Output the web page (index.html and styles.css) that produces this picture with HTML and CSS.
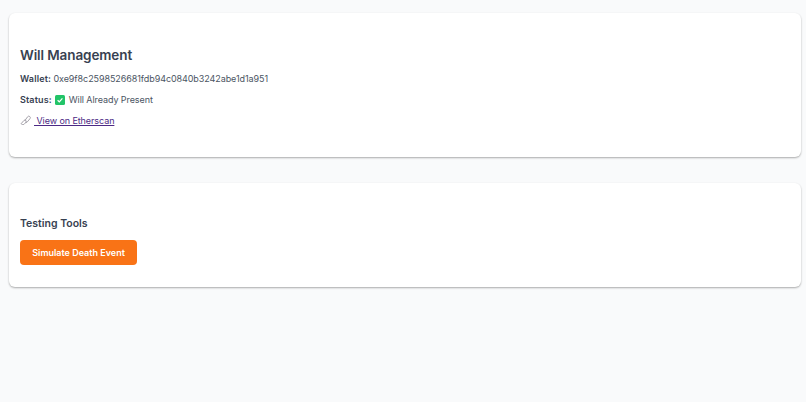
FILE: index.html
```html
<!DOCTYPE html>
<html lang="en">

<head>
    <meta charset="UTF-8">
    <title>Will Management</title>
    <link rel="stylesheet" href="styles.css">
</head>

<body>
    <div class="card card-will">
        <h2>Will Management</h2>
        <p><strong>Wallet:</strong> 0xe9f8c2598526681fdb94c0840b3242abe1d1a951</p>
        <p class="status"><strong>Status:</strong>
            <svg class="check" width="10" height="10" viewBox="0 0 10 10">
                <rect width="10" height="10" rx="1.5" fill="#22c468" />
                <path d="M2.6 5.2 4.3 6.8 7.4 3.4" fill="none" stroke="#fff" stroke-width="1.2" />
            </svg>
            Will Already Present
        </p>
        <a class="link" href="#">
            <svg class="chain" width="12" height="10" viewBox="0 0 12 10">
                <g fill="none" stroke="#8f8b96" stroke-width="0.8">
                    <path d="M1.2 8.6 4 5.4a1.4 1.4 0 0 1 2.1 1.8L4 9.4a1.3 1.3 0 0 1-2 0 1 1 0 0 1-.8-.8z" />
                    <path d="M5 5.4 7.6 1.8a1.5 1.5 0 0 1 2.4 1.8L7.4 6.8a1.4 1.4 0 0 1-2.1.2" />
                </g>
            </svg>
            View on Etherscan
        </a>
    </div>

    <div class="card card-tools">
        <h3>Testing Tools</h3>
        <button type="button">Simulate Death Event</button>
    </div>
</body>

</html>
```

FILE: styles.css
```css
body {
    background: #f9fafb;
    color: #4b5563;
    font-family: Inter, "Liberation Sans", sans-serif;
    font-size: 9px;
    letter-spacing: -0.08px;
    margin: 0;
    min-height: 100vh;
    box-sizing: border-box;
    padding: 13px 5px 0 9px;
}

.card {
    background-color: #fff;
    border-radius: 6px;
    box-shadow: 0 1px 2px rgba(0, 0, 0, 0.32);
    box-sizing: border-box;
    padding: 33px 11px 0;
}

.card-will {
    height: 144px;
    margin-bottom: 26px;
}

.card-tools {
    height: 104px;
}

h2 {
    color: #374151;
    font-size: 13.5px;
    font-weight: 600;
    letter-spacing: -0.1px;
    line-height: 18px;
    margin: 0 0 9px;
}

h3 {
    color: #374151;
    font-size: 10.5px;
    font-weight: 600;
    letter-spacing: 0;
    line-height: 14px;
    margin: 1px 0 9px;
}

p {
    line-height: 12px;
    margin: 0 0 9px;
}

strong {
    color: #374151;
    font-weight: 600;
    letter-spacing: 0.15px;
}

.status {
    display: flex;
    align-items: center;
    gap: 4px;
}

.status strong {
    margin-right: -1px;
}

.link {
    color: #4c2a85;
    display: block;
    line-height: 12px;
    text-decoration: underline;
}

.chain {
    margin-right: 2px;
    vertical-align: -1px;
}

button {
    background-color: #f97316;
    border: none;
    border-radius: 4px;
    color: #fff;
    cursor: pointer;
    font-family: inherit;
    font-size: 9px;
    font-weight: 600;
    height: 25px;
    letter-spacing: 0;
    padding: 0 0 1px;
    width: 117px;
}
```
